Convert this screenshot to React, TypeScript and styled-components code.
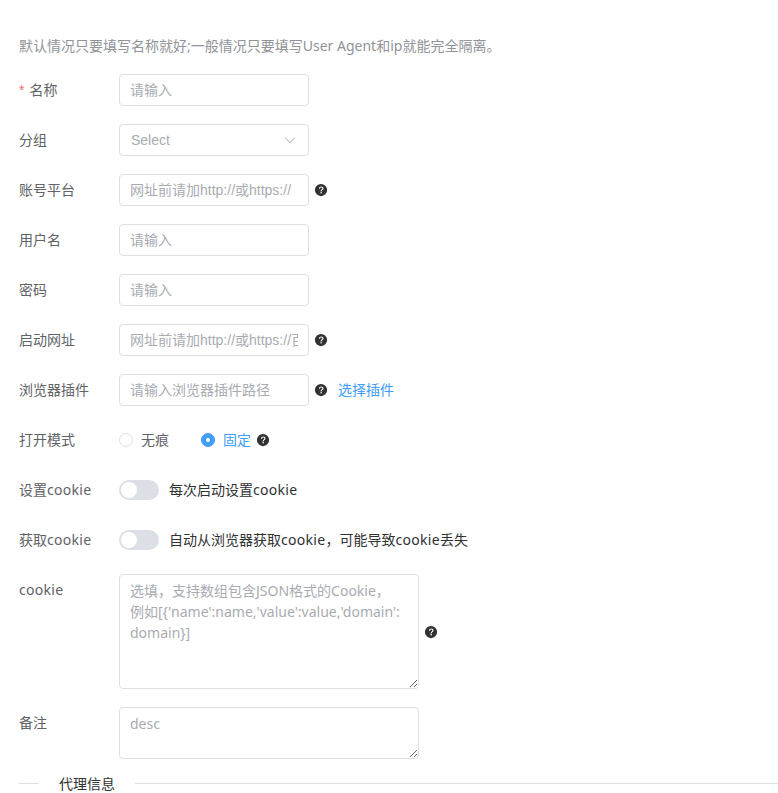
import React from "react";
import styled, { createGlobalStyle } from "styled-components";

const GlobalStyle = createGlobalStyle`
  html, body {
    margin: 0;
    padding: 0;
    height: 793px;
    overflow: hidden;
    background: #fff;
    font-family: "Noto Sans", "Noto Sans CJK SC", sans-serif;
  }
  * { box-sizing: border-box; }
`;

const Page = styled.div`
  padding: 36px 0 0 19px;
  width: 778px;
`;

const Notice = styled.div`
  height: 20px;
  line-height: 20px;
  font-size: 14px;
  color: #909399;
  margin-bottom: 18px;
`;

const Form = styled.form`
  display: flex;
  flex-direction: column;
  gap: 18px;
`;

const Row = styled.div`
  display: flex;
  align-items: flex-start;
`;

const Label = styled.label<{ $required?: boolean }>`
  width: 100px;
  flex: none;
  height: 32px;
  line-height: 32px;
  font-size: 14px;
  color: #606266;

  &::before {
    content: ${({ $required }) => ($required ? '"*"' : "none")};
    font-family: "Liberation Sans", sans-serif;
    color: #f56c6c;
    margin-right: 5px;
  }
`;

const CookieWord = styled.span`
  letter-spacing: 0.3px;
`;

const Control = styled.div`
  display: flex;
  align-items: center;
  min-height: 32px;
`;

const TextInput = styled.input`
  width: 190px;
  height: 32px;
  padding: 0 10px;
  border: 1px solid #dcdfe6;
  border-radius: 4px;
  outline: none;
  font-family: "Liberation Sans", "Noto Sans CJK SC", sans-serif;
  font-size: 14px;
  color: #606266;

  &::placeholder {
    color: #a8abb2;
    opacity: 1;
  }
`;

const SelectBox = styled.div`
  width: 190px;
  height: 32px;
  padding: 0 11px;
  border: 1px solid #dcdfe6;
  border-radius: 4px;
  display: flex;
  align-items: center;
  justify-content: space-between;
  font-family: "Liberation Sans", "Noto Sans CJK SC", sans-serif;
  font-size: 14px;
  color: #a8abb2;
`;

const TextArea = styled.textarea<{ $height: number }>`
  display: block;
  width: 300px;
  height: ${({ $height }) => $height}px;
  padding: 5px 10px;
  border: 1px solid #dcdfe6;
  border-radius: 4px;
  outline: none;
  font: inherit;
  font-size: 14px;
  line-height: 21px;
  color: #606266;

  &::placeholder {
    color: #a8abb2;
    opacity: 1;
  }
`;

const HelpIcon = styled.svg`
  width: 14px;
  height: 14px;
  flex: none;
  margin-left: 5px;
`;

const LinkText = styled.span`
  margin-left: 10px;
  font-size: 14px;
  line-height: 32px;
  color: #409eff;
`;

const RadioItem = styled.div<{ $gap?: number }>`
  display: flex;
  align-items: center;
  margin-right: ${({ $gap }) => $gap ?? 0}px;
`;

const RadioDot = styled.span<{ $checked?: boolean }>`
  width: 14px;
  height: 14px;
  flex: none;
  border-radius: 50%;
  background: ${({ $checked }) => ($checked ? "#409eff" : "#fff")};
  border: 1px solid ${({ $checked }) => ($checked ? "#409eff" : "#dcdfe6")};
  display: flex;
  align-items: center;
  justify-content: center;

  &::after {
    content: "";
    width: 4px;
    height: 4px;
    border-radius: 50%;
    background: ${({ $checked }) => ($checked ? "#fff" : "transparent")};
  }
`;

const RadioText = styled.span<{ $checked?: boolean }>`
  margin-left: 8px;
  font-size: 14px;
  line-height: 32px;
  color: ${({ $checked }) => ($checked ? "#409eff" : "#606266")};
`;

const SwitchTrack = styled.span`
  width: 40px;
  height: 20px;
  flex: none;
  border-radius: 10px;
  background: #dcdfe6;
  padding: 2px;
  display: flex;
`;

const SwitchKnob = styled.span`
  width: 16px;
  height: 16px;
  border-radius: 50%;
  background: #fff;
`;

const SwitchText = styled.span`
  margin-left: 10px;
  font-size: 14px;
  line-height: 32px;
  color: #303133;
`;

const Divider = styled.div`
  display: flex;
  align-items: center;
  margin-top: 14px;
  height: 20px;
`;

const DividerLine = styled.span<{ $width?: number }>`
  height: 1px;
  background: #dcdfe6;
  ${({ $width }) => ($width ? `width: ${$width}px; flex: none;` : "flex: 1;")}
`;

const DividerText = styled.span`
  padding: 0 20px;
  font-size: 14px;
  color: #303133;
`;

const Help: React.FC = () => (
  <HelpIcon viewBox="0 0 1024 1024">
    <path
      fill="#303133"
      d="M512 64a448 448 0 1 1 0 896 448 448 0 0 1 0-896zm23.744 191.488c-52.096 0-92.928 14.784-123.2 44.352-30.976 29.568-45.76 70.4-45.76 122.496h80.256c0-29.568 5.632-52.8 17.6-68.992 13.376-19.712 35.2-28.864 66.176-28.864 23.936 0 42.944 6.336 56.32 19.712 12.672 13.376 19.712 31.68 19.712 54.912 0 17.6-6.336 34.496-19.008 49.984l-8.448 9.856c-45.76 40.832-73.216 70.4-82.368 89.408-9.856 19.008-14.08 42.24-14.08 68.992v9.856h80.96v-9.856c0-16.896 3.52-31.68 10.56-45.76 6.336-12.672 15.488-24.64 28.16-35.2 33.792-29.568 54.208-48.576 60.544-55.616 16.896-22.528 26.048-51.392 26.048-86.592 0-42.944-14.08-76.736-42.24-101.376-28.16-25.344-65.472-37.312-111.232-37.312zm-12.672 406.208a54.272 54.272 0 0 0-38.72 14.784 49.408 49.408 0 0 0-15.488 38.016c0 15.488 4.928 28.16 15.488 38.016A54.848 54.848 0 0 0 523.072 768c15.488 0 28.16-4.928 38.72-14.784a51.52 51.52 0 0 0 16.192-38.72 51.968 51.968 0 0 0-15.488-38.016 55.936 55.936 0 0 0-39.424-14.784z"
    />
  </HelpIcon>
);

const Chevron = () => (
  <svg width="14" height="14" viewBox="0 0 1024 1024">
    <path
      fill="#a8abb2"
      d="M831.872 340.864 512 652.672 192.128 340.864a30.592 30.592 0 0 0-42.752 0 29.12 29.12 0 0 0 0 41.6L489.664 714.24a32 32 0 0 0 44.672 0l340.288-331.712a29.12 29.12 0 0 0 0-41.728 30.592 30.592 0 0 0-42.752 0z"
    />
  </svg>
);

const App: React.FC = () => {
  return (
    <Page>
      <GlobalStyle />
      <Notice>默认情况只要填写名称就好;一般情况只要填写User Agent和ip就能完全隔离。</Notice>
      <Form>
        <Row>
          <Label $required>名称</Label>
          <Control>
            <TextInput placeholder="请输入" />
          </Control>
        </Row>
        <Row>
          <Label>分组</Label>
          <Control>
            <SelectBox>
              Select
              <Chevron />
            </SelectBox>
          </Control>
        </Row>
        <Row>
          <Label>账号平台</Label>
          <Control>
            <TextInput placeholder="网址前请加http://或https://" />
            <Help />
          </Control>
        </Row>
        <Row>
          <Label>用户名</Label>
          <Control>
            <TextInput placeholder="请输入" />
          </Control>
        </Row>
        <Row>
          <Label>密码</Label>
          <Control>
            <TextInput placeholder="请输入" />
          </Control>
        </Row>
        <Row>
          <Label>启动网址</Label>
          <Control>
            <TextInput placeholder="网址前请加http://或https://百度" />
            <Help />
          </Control>
        </Row>
        <Row>
          <Label>浏览器插件</Label>
          <Control>
            <TextInput placeholder="请输入浏览器插件路径" />
            <Help />
            <LinkText>选择插件</LinkText>
          </Control>
        </Row>
        <Row>
          <Label>打开模式</Label>
          <Control>
            <RadioItem $gap={32}>
              <RadioDot />
              <RadioText>无痕</RadioText>
            </RadioItem>
            <RadioItem>
              <RadioDot $checked />
              <RadioText $checked>固定</RadioText>
            </RadioItem>
            <Help />
          </Control>
        </Row>
        <Row>
          <Label>
            设置<CookieWord>cookie</CookieWord>
          </Label>
          <Control>
            <SwitchTrack>
              <SwitchKnob />
            </SwitchTrack>
            <SwitchText>
              每次启动设置<CookieWord>cookie</CookieWord>
            </SwitchText>
          </Control>
        </Row>
        <Row>
          <Label>
            获取<CookieWord>cookie</CookieWord>
          </Label>
          <Control>
            <SwitchTrack>
              <SwitchKnob />
            </SwitchTrack>
            <SwitchText>
              自动从浏览器获取<CookieWord>cookie</CookieWord>，可能导致<CookieWord>cookie</CookieWord>丢失
            </SwitchText>
          </Control>
        </Row>
        <Row>
          <Label>
            <CookieWord>cookie</CookieWord>
          </Label>
          <Control>
            <TextArea
              $height={115}
              placeholder={"选填，支持数组包含JSON格式的Cookie，\n例如[{'name':name,'value':value,'domain': domain}]"}
            />
            <Help />
          </Control>
        </Row>
        <Row>
          <Label>备注</Label>
          <Control>
            <TextArea $height={52} placeholder="desc" />
          </Control>
        </Row>
      </Form>
      <Divider>
        <DividerLine $width={20} />
        <DividerText>代理信息</DividerText>
        <DividerLine />
      </Divider>
    </Page>
  );
};

export default App;
